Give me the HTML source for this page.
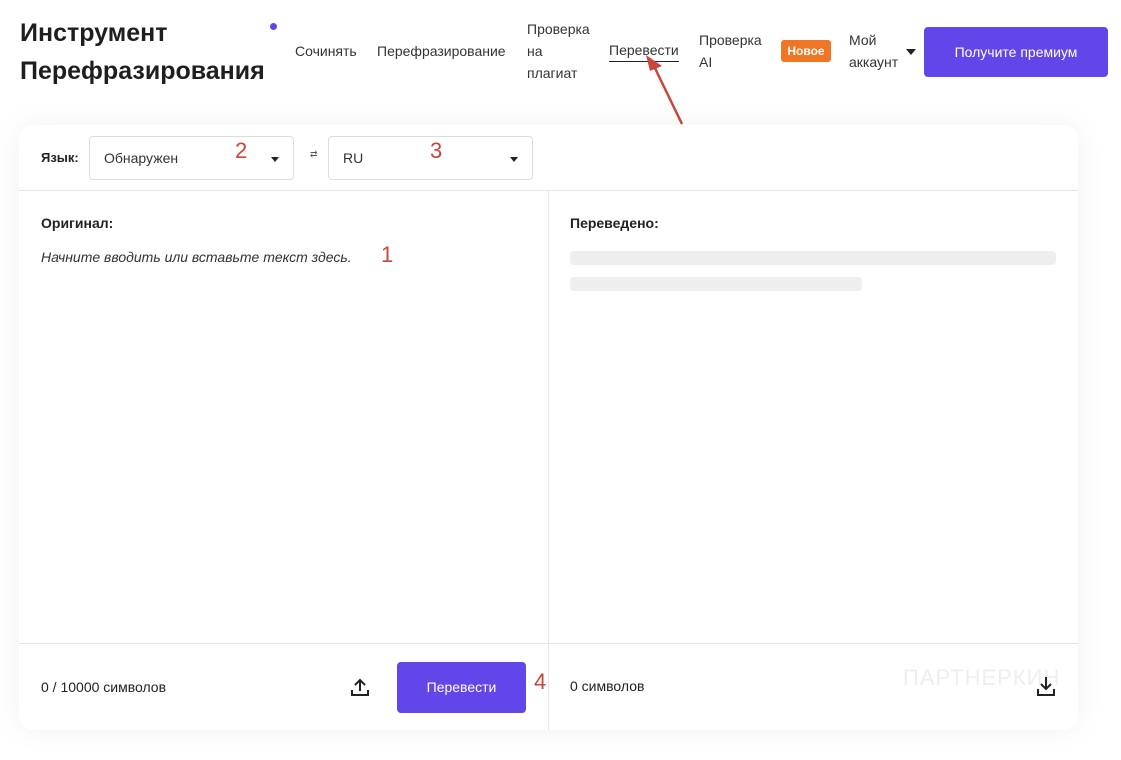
<!DOCTYPE html>
<html><head><meta charset="utf-8"><style>
*{box-sizing:border-box;margin:0;padding:0}
body{width:1121px;height:760px;background:#fff;font-family:"Liberation Sans",sans-serif;color:#222;position:relative;overflow:hidden}
.a{position:absolute}
.nav{font-size:14px;color:#333;line-height:22px}
.card{left:19px;top:125px;width:1059px;height:605px;background:#fff;border-radius:14px;box-shadow:0 0 30px rgba(0,0,0,0.06)}
.sel{border:1px solid #ddd;border-radius:4px;height:44px;width:205px;background:#fff;font-size:14px;color:#333;padding:13px 14px}
.caret{width:0;height:0;border-left:4px solid transparent;border-right:4px solid transparent;border-top:5px solid #222}
.red{color:#c8463c;font-size:22px}
</style></head><body>
<div class="a" style="left:20px;top:14px;font-size:25px;font-weight:bold;line-height:38px;color:#1e1e1e">Инструмент<br>Перефразирования</div>
<div class="a" style="left:270px;top:23px;width:7px;height:7px;border-radius:50%;background:#6246ea"></div>
<div class="a nav" style="left:295px;top:40px">Сочинять</div>
<div class="a nav" style="left:377px;top:40px">Перефразирование</div>
<div class="a nav" style="left:527px;top:18px">Проверка<br>на<br>плагиат</div>
<div class="a nav" style="left:609px;top:40px;border-bottom:1px solid #222;line-height:21px">Перевести</div>
<div class="a nav" style="left:699px;top:29px">Проверка<br>AI</div>
<div class="a" style="left:781px;top:40px;width:50px;height:22px;background:#ee7624;border-radius:3px;color:#fff;font-size:12px;font-weight:bold;text-align:center;line-height:22px">Новое</div>
<div class="a nav" style="left:849px;top:29px">Мой<br>аккаунт</div>
<div class="a caret" style="left:906px;top:49px;border-left-width:5px;border-right-width:5px;border-top-width:6px"></div>
<div class="a" style="left:924px;top:27px;width:184px;height:50px;background:#6246ea;border-radius:4px;color:#fff;font-size:14px;text-align:center;line-height:50px">Получите премиум</div>
<svg class="a" style="left:640px;top:50px" width="50" height="80"><line x1="42" y1="74" x2="12" y2="12" stroke="#c8463c" stroke-width="2.5"/><polygon points="6,5 22,16 10,21" fill="#c8463c"/></svg>
<div class="a card">
 <div class="a" style="left:22px;top:25px;font-size:13px;font-weight:bold">Язык:</div>
 <div class="a sel" style="left:70px;top:11px">Обнаружен<div class="a caret" style="right:14px;top:20px"></div></div>
 <div class="a" style="left:291px;top:24px;font-size:9px;color:#555">⇄</div>
 <div class="a sel" style="left:309px;top:11px">RU<div class="a caret" style="right:14px;top:20px"></div></div>
 <div class="a red" style="left:216px;top:13px">2</div>
 <div class="a red" style="left:411px;top:13px">3</div>
 <div class="a" style="left:0;top:65px;width:1059px;height:1px;background:#e5e5e5"></div>
 <div class="a" style="left:529px;top:65px;width:1px;height:540px;background:#e5e5e5"></div>
 <div class="a" style="left:0;top:518px;width:1059px;height:1px;background:#e5e5e5"></div>
 <div class="a" style="left:22px;top:90px;font-size:14px;font-weight:bold">Оригинал:</div>
 <div class="a" style="left:22px;top:124px;font-size:14px;font-style:italic;color:#333">Начните вводить или вставьте текст здесь.</div>
 <div class="a red" style="left:362px;top:117px">1</div>
 <div class="a" style="left:551px;top:90px;font-size:14px;font-weight:bold">Переведено:</div>
 <div class="a" style="left:551px;top:126px;width:486px;height:14px;background:#eee;border-radius:4px"></div>
 <div class="a" style="left:551px;top:152px;width:292px;height:14px;background:#eee;border-radius:4px"></div>
 <div class="a" style="left:22px;top:554px;font-size:14px">0 / 10000 символов</div>
 <svg class="a" style="left:331px;top:552px" width="20" height="20"><path d="M10 14V3M5 8l5-5 5 5M2 13v5h16v-5" fill="none" stroke="#222" stroke-width="2"/></svg>
 <div class="a" style="left:378px;top:537px;width:129px;height:51px;background:#6246ea;border-radius:4px;color:#fff;font-size:14px;text-align:center;line-height:51px">Перевести</div>
 <div class="a red" style="left:515px;top:544px">4</div>
 <div class="a" style="left:551px;top:553px;font-size:14px">0 символов</div>
 <div class="a" style="left:884px;top:540px;font-size:22px;color:#eee;letter-spacing:1px">ПАРТНЕРКИН</div>
 <svg class="a" style="left:1017px;top:550px" width="20" height="22"><path d="M10 2v12M5 9l5 5 5-5M2 14v6h16v-6" fill="none" stroke="#222" stroke-width="2"/></svg>
</div>
</body></html>
